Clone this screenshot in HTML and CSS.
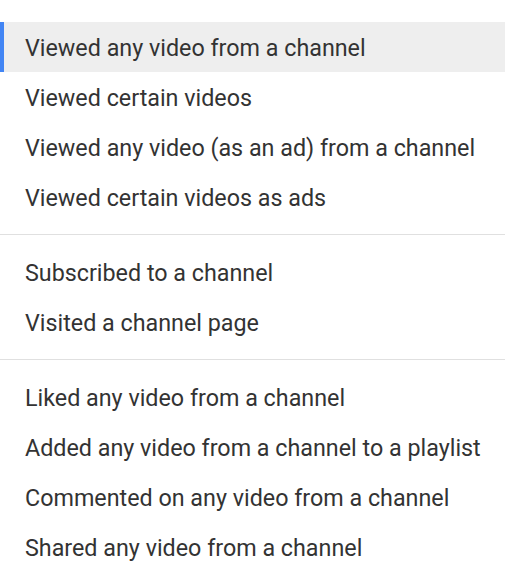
FILE: index.html
```html
<!DOCTYPE html>
<html lang="en">
<head>
  <meta charset="UTF-8" />
  <title>Audience activity</title>
  <link rel="stylesheet" href="styles.css">
</head>
<body>
  <div class="menu">
    <div class="group">
      <div class="item selected">Viewed any video from a channel</div>
      <div class="item">Viewed certain videos</div>
      <div class="item">Viewed any video (as an ad) from a channel</div>
      <div class="item">Viewed certain videos as ads</div>
    </div>
    <div class="group">
      <div class="item">Subscribed to a channel</div>
      <div class="item">Visited a channel page</div>
    </div>
    <div class="group">
      <div class="item">Liked any video from a channel</div>
      <div class="item">Added any video from a channel to a playlist</div>
      <div class="item">Commented on any video from a channel</div>
      <div class="item">Shared any video from a channel</div>
    </div>
  </div>
</body>
</html>
```

FILE: styles.css
```css
body { margin: 0; background: #fff; font-family: Roboto, Arial, sans-serif; }
.menu { padding-top: 10px; }
.group { padding: 12px 0; border-top: 1px solid #e0e0e0; }
.group:first-child { border-top: none; }
.item {
  height: 50px;
  line-height: 52px;
  padding-left: 25px;
  font-size: 23.3px;
  color: #333;
  white-space: nowrap;
}
.selected {
  background: #eeeeee;
  box-shadow: inset 4px 0 0 #4285f4;
}
```
